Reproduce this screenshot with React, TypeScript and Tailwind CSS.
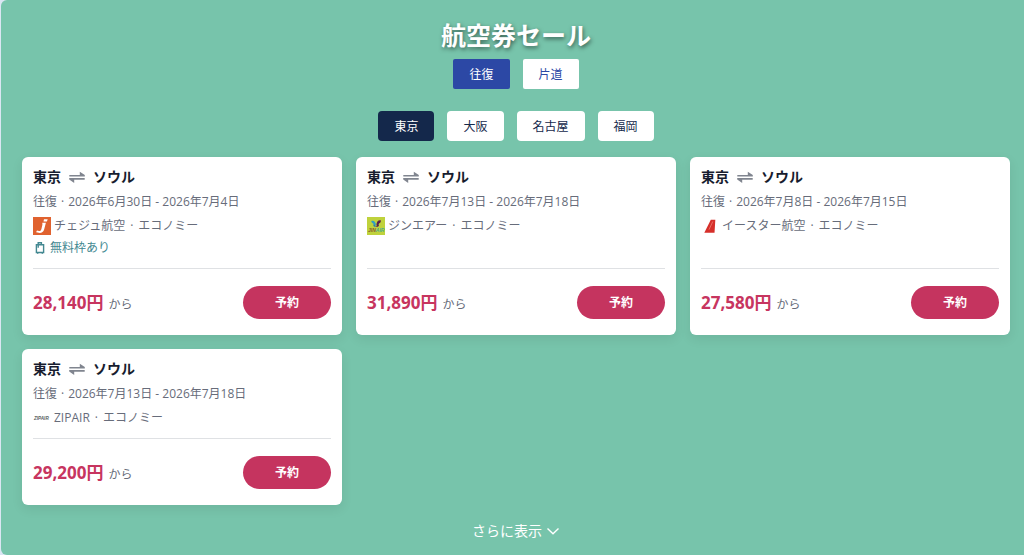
import React, { useState } from "react";
import clsx from "clsx";

type Fare = {
  id: number;
  from: string;
  to: string;
  dates: string;
  airline: string;
  logo: React.ReactNode;
  freeBag?: boolean;
  price: string;
};

const JejuLogo = () => (
  <svg viewBox="0 0 18 18" className="size-[18px]" aria-hidden="true">
    <rect width="18" height="18" fill="#e0622f" />
    <path
      d="M9.300 5.800h3.600l-1.700 6.400c-.7 2.500-2.300 3.800-4.500 3.800-1.600 0-2.800-.3-3.500-.9l.8-1.500c.6.3 1.200.5 2 .5 1.300 0 2-.7 2.400-2.200l1-4.200z"
      fill="#fff"
    />
    <path d="M11 2.200h3.700l-.8 2.200h-3.400z" fill="#fff" />
  </svg>
);

const JinAirLogo = () => (
  <svg viewBox="0 0 18 18" className="size-[18px]" aria-hidden="true">
    <rect width="18" height="18" fill="#bfd23c" />
    <path d="M4.300 4c2.600-.9 4.500 1 4.600 4.200-2 .3-2.500-.7-2.700-1.800C5 6.100 4.300 5.200 4.300 4z" fill="#2f9fc4" />
    <path d="M6.200 7.800c1.400-.3 2.500.2 2.700 2.200-1.600.2-2.600-.6-2.700-2.200z" fill="#2f7fa8" />
    <path d="M13.900 3.400c-2.700-.6-4.400 1.400-4.500 4.800 2 .3 2.400-.7 2.600-1.700 1.300-.5 1.900-1.600 1.900-3.100z" fill="#5b2149" />
    <path d="M12 7.800c-1.500-.3-2.600.2-2.800 2.200 1.600.2 2.700-.6 2.800-2.200z" fill="#5b2149" />
    <text x="1" y="14.500" fontSize="5" fontWeight="700" fontStyle="italic" fontFamily="Liberation Sans, sans-serif">
      <tspan fill="#8a5a2a">JIN</tspan>
      <tspan fill="#4cae8c">AIR</tspan>
    </text>
  </svg>
);

const EastarLogo = () => (
  <svg viewBox="0 0 18 18" className="size-[18px]" aria-hidden="true">
    <path d="M9.800 2.800h4.500L13.500 15.800H3.300z" fill="#d62f2a" />
    <path d="M11.800 4.500 8 12.700" stroke="#ee8b80" strokeWidth=".7" fill="none" />
  </svg>
);

const ZipairLogo = () => (
  <svg viewBox="0 0 18 18" className="size-[18px]" aria-hidden="true">
    <text
      x="1"
      y="10.800"
      fontSize="4.600"
      fontWeight="700"
      fontStyle="italic"
      fill="#58625f"
      fontFamily="Liberation Sans, sans-serif"
    >
      ZIPAIR
    </text>
  </svg>
);

const RoundTripIcon = () => (
  <svg viewBox="0 0 16 12" className="w-4 h-3" fill="#80858f" aria-hidden="true">
    <path d="M.3 3.900h10.500V.7L15.800 4v1.500H.3z" />
    <path d="M15.700 8.700H5.200v3.200L.2 8.600V7.100h15.500z" />
  </svg>
);

const BagIcon = () => (
  <svg viewBox="0 0 14 14" className="size-[14px]" fill="none" stroke="#438891" strokeWidth="1.400" aria-hidden="true">
    <path d="M3.400 3.700h7.200v7.800H3.400z" />
    <path d="M5.200 6.800V1.700h3.200v2M4.700 11.500v1.300M9.300 11.500v1.300" />
  </svg>
);

const fares: Fare[] = [
  {
    id: 1,
    from: "東京",
    to: "ソウル",
    dates: "2026年6月30日 - 2026年7月4日",
    airline: "チェジュ航空",
    logo: <JejuLogo />,
    freeBag: true,
    price: "28,140円",
  },
  {
    id: 2,
    from: "東京",
    to: "ソウル",
    dates: "2026年7月13日 - 2026年7月18日",
    airline: "ジンエアー",
    logo: <JinAirLogo />,
    price: "31,890円",
  },
  {
    id: 3,
    from: "東京",
    to: "ソウル",
    dates: "2026年7月8日 - 2026年7月15日",
    airline: "イースター航空",
    logo: <EastarLogo />,
    price: "27,580円",
  },
  {
    id: 4,
    from: "東京",
    to: "ソウル",
    dates: "2026年7月13日 - 2026年7月18日",
    airline: "ZIPAIR",
    logo: <ZipairLogo />,
    price: "29,200円",
  },
];

const trips = ["往復", "片道"];
const cities = ["東京", "大阪", "名古屋", "福岡"];

const FareCard = ({ fare }: { fare: Fare }) => (
  <article className="flex flex-col rounded-md bg-white px-[11px] pt-[10px] pb-4 shadow-[0_4px_12px_rgba(0,0,0,0.08)]">
    <h2 className="flex items-center gap-2 text-sm leading-5 font-bold text-[#171c2e]">
      {fare.from}
      <RoundTripIcon />
      {fare.to}
    </h2>
    <p className="mt-[5px] flex gap-1 leading-5">
      <span>往復</span>
      <span>·</span>
      <span>{fare.dates}</span>
    </p>
    <div className="mt-1 flex items-center gap-[3px] leading-5">
      {fare.logo}
      <p className="flex gap-[5px]">
        <span>{fare.airline}</span>
        <span>·</span>
        <span>エコノミー</span>
      </p>
    </div>
    {fare.freeBag && (
      <div className="mt-[2px] flex items-center gap-[3px] leading-5 text-[#438891]">
        <BagIcon />
        <span>無料枠あり</span>
      </div>
    )}
    <div className="mt-auto pt-[10px]">
      <div className="flex items-center justify-between border-t border-[#dfe1e4] pt-[17px]">
        <p className="flex items-baseline gap-[5px]">
          <span className="text-[17px] leading-6 font-bold text-[#c7355f]">{fare.price}</span>
          から
        </p>
        <button
          type="button"
          className="h-[33px] rounded-full bg-[#c5345f] px-8 pt-px font-bold text-white"
        >
          予約
        </button>
      </div>
    </div>
  </article>
);

const App = () => {
  const [trip, setTrip] = useState("往復");
  const [city, setCity] = useState("東京");

  return (
    <div className="min-h-screen bg-[#dbe6f3] pl-px font-['Open_Sans','Noto_Sans_CJK_JP',sans-serif] text-xs text-[#676c7a]">
      <main className="flex min-h-screen flex-col items-center rounded-l-md bg-[#77c4ab] pt-[17px] pr-[14px] pb-[13px] pl-[21px]">
        <h1 className="text-[25px] leading-9 font-bold text-white [text-shadow:1px_2px_4px_rgba(0,0,0,0.5)]">
          航空券セール
        </h1>

        <div className="mt-[6px] flex gap-[13px]">
          {trips.map((name) => (
            <button
              key={name}
              type="button"
              aria-pressed={trip === name}
              onClick={() => setTrip(name)}
              className={clsx(
                "h-[30px] rounded-xs px-4 pt-px",
                trip === name ? "bg-[#2c48a5] text-white" : "bg-white text-[#2c48a5]"
              )}
            >
              {name}
            </button>
          ))}
        </div>

        <div className="mt-[22px] flex gap-[13px]">
          {cities.map((name) => (
            <button
              key={name}
              type="button"
              aria-pressed={city === name}
              onClick={() => setCity(name)}
              className={clsx(
                "h-[30px] rounded-sm px-4 pt-px",
                city === name ? "bg-[#14284b] text-white" : "bg-white text-[#14284b]"
              )}
            >
              {name}
            </button>
          ))}
        </div>

        <section className="mt-4 grid w-full grid-cols-3 gap-[14px]">
          {fares.map((fare) => (
            <FareCard key={fare.id} fare={fare} />
          ))}
        </section>

        <button type="button" className="mt-4 flex items-center gap-1 text-sm leading-5 text-white">
          さらに表示
          <svg viewBox="0 0 14 14" className="size-[14px]" fill="none" stroke="currentColor" strokeWidth="1.400" aria-hidden="true">
            <path d="M1.500 4.500 7 9.800l5.500-5.300" />
          </svg>
        </button>
      </main>
    </div>
  );
};

export default App;
